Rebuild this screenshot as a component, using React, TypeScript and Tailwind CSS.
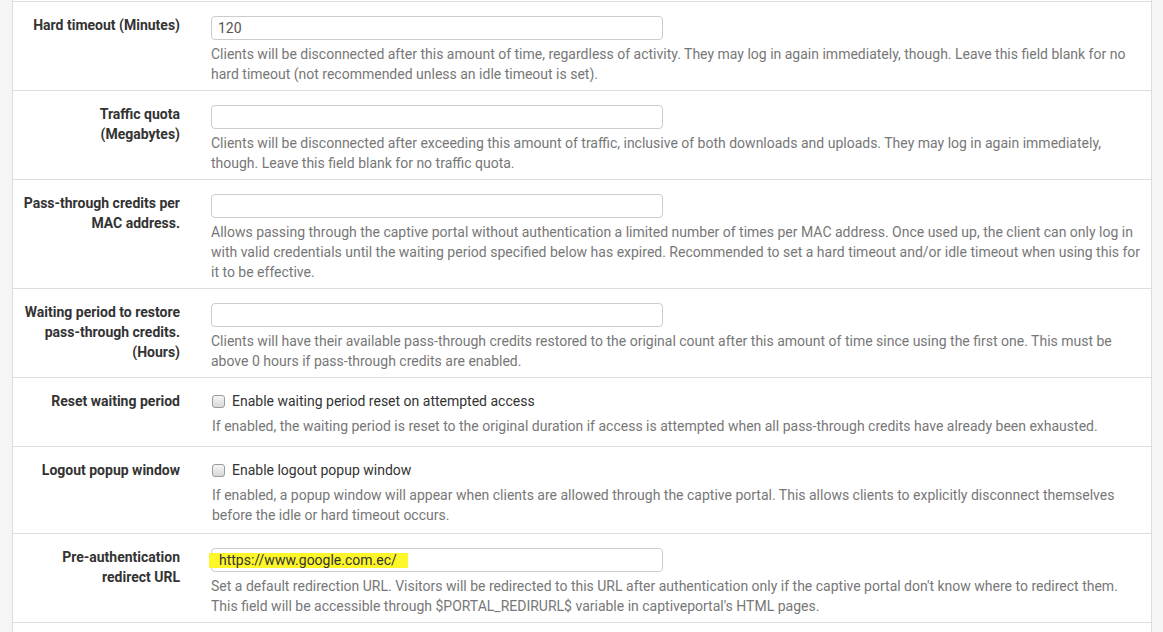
import React from "react";

const font = { fontFamily: "Roboto, 'Open Sans', sans-serif" };

function Label({ children }: { children: React.ReactNode }) {
  return (
    <div className="w-[183px] shrink-0 pl-[4px] pr-[16px] pt-[13px] text-right text-[14px] leading-[20px] font-bold text-[#333]">
      {children}
    </div>
  );
}

function Help({ children }: { children: React.ReactNode }) {
  return <div className="text-[14px] leading-[20px] text-[#777]">{children}</div>;
}

function TextInput({ value, highlight }: { value?: string; highlight?: boolean }) {
  return (
    <div className="relative h-[24px] w-[452px] rounded-[4px] border border-[#ccc] bg-white pl-[6px] text-[14px] leading-[22px] text-[#555]">
      {highlight && (
        <span className="absolute left-[-3px] top-[4px] h-[15px] w-[199px] bg-[#fdf72a]" />
      )}
      <span className={highlight ? "relative pl-[1px] text-[#333]" : "relative"}>{value}</span>
    </div>
  );
}

function InputRow({
  label,
  value,
  highlight,
  help,
}: {
  label: React.ReactNode;
  value?: string;
  highlight?: boolean;
  help: React.ReactNode;
}) {
  return (
    <div className="flex border-b border-[#ddd]">
      <Label>{label}</Label>
      <div className="flex-1 pl-[15px] pr-[10px] pt-[14px] pb-[6px]">
        <TextInput value={value} highlight={highlight} />
        <div className="mt-[4px]">
          <Help>{help}</Help>
        </div>
      </div>
    </div>
  );
}

function CheckRow({
  label,
  text,
  help,
  tight,
}: {
  label: string;
  text: string;
  help: React.ReactNode;
  tight?: boolean;
}) {
  return (
    <div className="flex border-b border-[#ddd]">
      <Label>{label}</Label>
      <div className={tight ? "flex-1 pl-[16px] pr-[10px] pt-[13px] pb-[8px]" : "flex-1 pl-[16px] pr-[10px] pt-[13px] pb-[10px]"}>
        <div className="flex h-[20px] items-center text-[14px] text-[#333]">
          <span className="mr-[7px] h-[13px] w-[13px] rounded-[3px] border border-[#9a9a9a] bg-gradient-to-b from-[#f6f6f6] to-[#d8d8d8]" />
          <span>{text}</span>
        </div>
        <div className="mt-[5px]">
          <Help>{help}</Help>
        </div>
      </div>
    </div>
  );
}

export default function App() {
  return (
    <div style={font} className="flex h-[632px] w-[1163px] overflow-hidden bg-[#f5f5f5] pl-[12px] pr-[11px]">
      <div className="flex flex-1 flex-col border-x border-[#ddd] bg-white">
        <div className="h-px border-b border-[#ddd] box-content" />
        <InputRow
          label="Hard timeout (Minutes)"
          value="120"
          help="Clients will be disconnected after this amount of time, regardless of activity. They may log in again immediately, though. Leave this field blank for no hard timeout (not recommended unless an idle timeout is set)."
        />
        <InputRow
          label={
            <>
              Traffic quota
              <br />
              (Megabytes)
            </>
          }
          help="Clients will be disconnected after exceeding this amount of traffic, inclusive of both downloads and uploads. They may log in again immediately, though. Leave this field blank for no traffic quota."
        />
        <InputRow
          label={
            <>
              Pass-through credits per
              <br />
              MAC address.
            </>
          }
          help="Allows passing through the captive portal without authentication a limited number of times per MAC address. Once used up, the client can only log in with valid credentials until the waiting period specified below has expired. Recommended to set a hard timeout and/or idle timeout when using this for it to be effective."
        />
        <InputRow
          label={
            <>
              Waiting period to restore
              <br />
              pass-through credits.
              <br />
              (Hours)
            </>
          }
          help="Clients will have their available pass-through credits restored to the original count after this amount of time since using the first one. This must be above 0 hours if pass-through credits are enabled."
        />
        <CheckRow
          label="Reset waiting period"
          text="Enable waiting period reset on attempted access"
          help="If enabled, the waiting period is reset to the original duration if access is attempted when all pass-through credits have already been exhausted."
        />
        <CheckRow
          label="Logout popup window"
          text="Enable logout popup window"
          tight
          help="If enabled, a popup window will appear when clients are allowed through the captive portal. This allows clients to explicitly disconnect themselves before the idle or hard timeout occurs."
        />
        <InputRow
          label={
            <>
              Pre-authentication
              <br />
              redirect URL
            </>
          }
          value="https://www.google.com.ec/"
          highlight
          help="Set a default redirection URL. Visitors will be redirected to this URL after authentication only if the captive portal don't know where to redirect them. This field will be accessible through $PORTAL_REDIRURL$ variable in captiveportal's HTML pages."
        />
        <div className="flex-1" />
      </div>
    </div>
  );
}
